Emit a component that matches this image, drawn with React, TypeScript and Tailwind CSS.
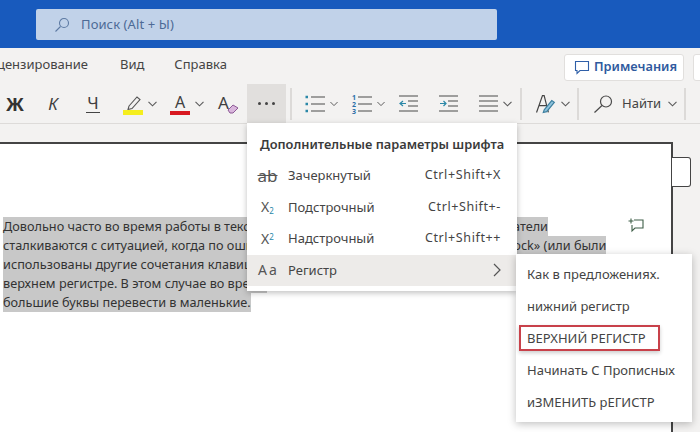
import React from "react";

const Chev = ({ className = "" }: { className?: string }) => (
  <svg width="9" height="6" viewBox="0 0 9 6" className={className} fill="none" stroke="#5a5a5a" strokeWidth="1.1">
    <path d="M0.5 0.8l4 4 4-4" />
  </svg>
);

const Sep = ({ className = "" }: { className?: string }) => <div className={`w-[2px] h-[32px] bg-[#dcdad8] shrink-0 ${className}`} />;

const Slot = ({ w, children, className = "" }: { w: number; children: React.ReactNode; className?: string }) => (
  <div style={{ width: w }} className={`shrink-0 flex items-center justify-center h-full ${className}`}>{children}</div>
);

const Lines = ({ accent = false }: { accent?: boolean }) => (
  <svg width="20" height="18" viewBox="0 0 20 18" fill="none" strokeWidth="1.2" stroke="#4a4a4a">
    <path d="M6 2h14M6 9h14M6 16h14" />
    {accent && <path d="M0.5 2h2.500M0.5 9h2.500M0.5 16h2.500" stroke="#2b88a8" strokeWidth="2.600" />}
  </svg>
);

const Toolbar = () => (
  <div className="h-[39px] flex items-center bg-[#f3f2f1] text-[#404040]">
    <Slot w={30}><span className="text-[18px] font-bold text-[#333] leading-none">Ж</span></Slot>
    <Slot w={46}><span className="text-[17px] italic leading-none">К</span></Slot>
    <Slot w={34}>
      <span className="text-[17px] leading-none border-b border-[#444] px-[1px] pb-[1px]">Ч</span>
    </Slot>
    <Slot w={26} className="ml-[10px]">
      <svg width="22" height="24" viewBox="0 0 22 24" fill="none">
        <path d="M7 14l8-9 3 2.500-8 9-4 1z" stroke="#555" strokeWidth="1.100" />
        <rect x="1" y="18" width="20" height="5" fill="#f5ee1e" />
      </svg>
    </Slot>
    <Slot w={12}><Chev /></Slot>
    <Slot w={24} className="ml-[10px]">
      <div className="flex flex-col items-center">
        <span className="text-[16px] leading-[18px]">A</span>
        <div className="w-[20px] h-[4px] bg-[#d81820]" />
      </div>
    </Slot>
    <Slot w={14}><Chev /></Slot>
    <Slot w={28} className="ml-[8px]">
      <div className="relative w-[20px] h-[20px]">
        <span className="absolute left-0 top-0 text-[17px] leading-[18px]">A</span>
        <svg width="12" height="10" viewBox="0 0 12 10" className="absolute right-[-1px] bottom-0" fill="#d9b6dc" stroke="#8d5a96">
          <path d="M1 6l5-5 5 3-5 5H3z" />
        </svg>
      </div>
    </Slot>
    <div className="w-[39px] h-[39px] ml-[5px] bg-[#e1dfdd] flex items-center justify-center gap-[4px] shrink-0">
      <i className="w-[3px] h-[3px] bg-[#444] rounded-full" />
      <i className="w-[3px] h-[3px] bg-[#444] rounded-full" />
      <i className="w-[3px] h-[3px] bg-[#444] rounded-full" />
    </div>
    <Sep className="ml-[4px]" />
    <Slot w={30} className="ml-[8px]"><Lines accent /></Slot>
    <Slot w={8}><Chev /></Slot>
    <Slot w={30} className="ml-[9px]">
      <div className="relative">
        <Lines />
        <span className="absolute left-0 top-[-1px] text-[7px] leading-[7px] text-[#2b6fa8] font-bold">1<br />2<br />3</span>
      </div>
    </Slot>
    <Slot w={8}><Chev /></Slot>
    <Slot w={48}>
      <svg width="20" height="19" viewBox="0 0 20 19" fill="none" stroke="#4a4a4a" strokeWidth="1.200">
        <path d="M0 2h19M9 7h10M9 12h10M0 17h19" />
        <path d="M7 9.500H1M4 7L1 9.500 4 12" stroke="#2b88a8" />
      </svg>
    </Slot>
    <Slot w={32}>
      <svg width="20" height="19" viewBox="0 0 20 19" fill="none" stroke="#4a4a4a" strokeWidth="1.200">
        <path d="M0 2h19M9 7h10M9 12h10M0 17h19" />
        <path d="M1 9.500h6M4.500 7L7 9.500 4.500 12" stroke="#2b88a8" />
      </svg>
    </Slot>
    <Slot w={28} className="ml-[9px]">
      <svg width="19" height="19" viewBox="0 0 19 19" fill="none" stroke="#4a4a4a" strokeWidth="1.200">
        <path d="M0 2h19M0 7h19M0 12h19M0 17h19" />
      </svg>
    </Slot>
    <Slot w={10}><Chev /></Slot>
    <Sep className="ml-[8px]" />
    <Slot w={30} className="ml-[8px]">
      <svg width="22" height="22" viewBox="0 0 26 26" fill="none" stroke="#444" strokeWidth="1.400">
        <path d="M3 23L10 3h2l5 20M6 15h9" />
        <path d="M12 20l9-11 3 2-9 11-4 1z" fill="#8fc3dc" stroke="#3c7f9f" />
      </svg>
    </Slot>
    <Slot w={10}><Chev /></Slot>
    <Sep className="ml-[7px]" />
    <div className="flex items-center ml-[14px] shrink-0">
      <svg width="20" height="18" viewBox="0 0 20 18" fill="none" stroke="#4a4a4a" strokeWidth="1.200">
        <circle cx="13" cy="6.500" r="5.500" />
        <path d="M9 10.500L1.500 17.500" />
      </svg>
      <span className="text-[13px] ml-[9px] text-[#444]">Найти</span>
      <Chev className="ml-[7px]" />
    </div>
    <Sep className="ml-[7px]" />
  </div>
);

const Row = ({ icon, label, keys, active }: { icon: React.ReactNode; label: string; keys?: string; active?: boolean }) => (
  <div className={`h-[31.500px] flex items-center ${active ? "bg-[#edebe9]" : ""}`}>
    <div className="w-[41px] flex justify-center shrink-0">{icon}</div>
    <span className="text-[13px] text-[#444]">{label}</span>
    <span className="ml-auto mr-[16px] text-[12.500px] text-[#444] tracking-[0.6px]">{keys}</span>
    {active && (
      <svg width="10" height="14" viewBox="0 0 10 14" fill="none" stroke="#555" strokeWidth="1.200" className="mr-[15px]">
        <path d="M2 1l6 6-6 6" />
      </svg>
    )}
  </div>
);

const docLines = [
  "Довольно часто во время работы в текстовом редакторе Microsoft Word – пользователи",
  "сталкиваются с ситуацией, когда по ошибке случайно была нажата кнопка «Caps Lock» (или были",
  "использованы другие сочетания клавиш), и текст оказался набранным",
  "верхнем регистре. В этом случае во время",
  "большие буквы перевести в маленькие.",
];

const subItems = ["Как в предложениях.", "нижний регистр", "ВЕРХНИЙ РЕГИСТР", "Начинать С Прописных", "иЗМЕНИТЬ рЕГИСТР"];

export default function App() {
  return (
    <div className="relative w-[700px] h-[432px] overflow-hidden bg-[#f3f2f1] flex flex-col" style={{ fontFamily: '"Noto Sans", sans-serif' }}>
      <header className="h-[48px] bg-[#185abd] shrink-0 pl-[36px] pt-[9px]">
        <div className="w-[461px] h-[31px] rounded-[2px] bg-[#c1d2e9] flex items-center pl-[18px] text-[#4d6a96]">
          <svg width="16" height="16" viewBox="0 0 16 16" fill="none" stroke="#5d7aa3" strokeWidth="1.100">
            <circle cx="10" cy="6" r="4.500" />
            <path d="M6.500 9.500L1.500 14.500" />
          </svg>
          <span className="text-[13px] ml-[11px] tracking-[0.1px]">Поиск (Alt + Ы)</span>
        </div>
      </header>

      <div className="h-[36px] shrink-0 flex items-center overflow-hidden text-[13px] text-[#444] relative">
        <span className="ml-[-3px] mt-[-2px]">цензирование</span>
        <span className="ml-[32px] mt-[-2px]">Вид</span>
        <span className="ml-[30px] mt-[-2px]">Справка</span>
        <div className="ml-auto flex items-center gap-[9px] mr-[-30px] pt-[2px]">
          <div className="w-[120px] h-[27px] bg-white border border-[#e1dfdd] rounded-[3px] flex items-center pl-[9px] gap-[4px]">
            <svg width="16" height="16" viewBox="0 0 16 16" fill="none" stroke="#2f5fa8" strokeWidth="1.100">
              <path d="M1.500 2.500h13v9H6l-3 3v-3H1.500z" />
            </svg>
            <span className="text-[12.800px] font-semibold text-[#2f5a9e]">Примечания</span>
          </div>
          <div className="w-[37px] h-[27px] bg-white border border-[#e1dfdd] rounded-[3px]" />
        </div>
      </div>

      <Toolbar />
      <div className="h-[1px] bg-[#dddbd9] shrink-0" />

      <main className="flex-1 pt-[18px] relative">
        <div className="w-[673px] h-full bg-white border-t-[2px] border-r-[2px] border-[#444] pt-[73px] pl-[3px]">
          <div className="text-[12.700px] leading-[19px] text-[#333]">
            {docLines.map((l) => (
              <div key={l}>
                <span className="bg-[#c8c8c8] inline-block h-[19px] whitespace-nowrap">{l}</span>
              </div>
            ))}
          </div>
        </div>
        <div className="absolute left-[672px] top-[33px] w-[19px] h-[30px] bg-white border border-l-0 border-[#444] rounded-r-[3px]" />
        <svg width="16" height="15" viewBox="0 0 16 15" fill="none" stroke="#3f5f48" strokeWidth="1.100" className="absolute left-[628px] top-[94px]">
          <path d="M6 2h9v8H7l-3 3V7" />
          <path d="M3 0.500v5M0.500 3h5" />
        </svg>
      </main>

      <div className="absolute left-[247px] top-[123px] w-[270px] h-[168px] bg-white shadow-[0_2px_6px_rgba(0,0,0,0.25)] flex flex-col">
        <div className="h-[37px] pl-[13px] pt-[12px] text-[12.800px] font-semibold text-[#3a3a3a] leading-[18px] whitespace-nowrap">Дополнительные параметры шрифта</div>
        <Row icon={<span className="text-[17px] leading-none text-[#555] line-through">ab</span>} label="Зачеркнутый" keys="Ctrl+Shift+X" />
        <Row icon={<span className="text-[14px] text-[#555] leading-none">X<sub className="text-[8px] text-[#2b88a8]">2</sub></span>} label="Подстрочный" keys="Ctrl+Shift+-" />
        <Row icon={<span className="text-[14px] text-[#555] leading-none">X<sup className="text-[8px] text-[#2b88a8]">2</sup></span>} label="Надстрочный" keys="Ctrl+Shift++" />
        <Row icon={<span className="text-[14px] text-[#555] tracking-[2px] leading-none ml-[2px]">Aa</span>} label="Регистр" active />
      </div>

      <div className="absolute left-[516px] top-[254px] w-[176px] h-[168px] bg-white shadow-[0_2px_8px_rgba(0,0,0,0.25)] pt-[5px]">
        {subItems.map((s, i) => (
          <div key={s} className="h-[32px] pl-[11px] flex items-center text-[13px] text-[#444] relative">
            {s}
            {i === 2 && <div className="absolute left-[3px] top-[2px] w-[141px] h-[26px] border-2 border-[#c8414a] shadow-[0_2px_4px_rgba(0,0,0,0.2)]" />}
          </div>
        ))}
      </div>
    </div>
  );
}
